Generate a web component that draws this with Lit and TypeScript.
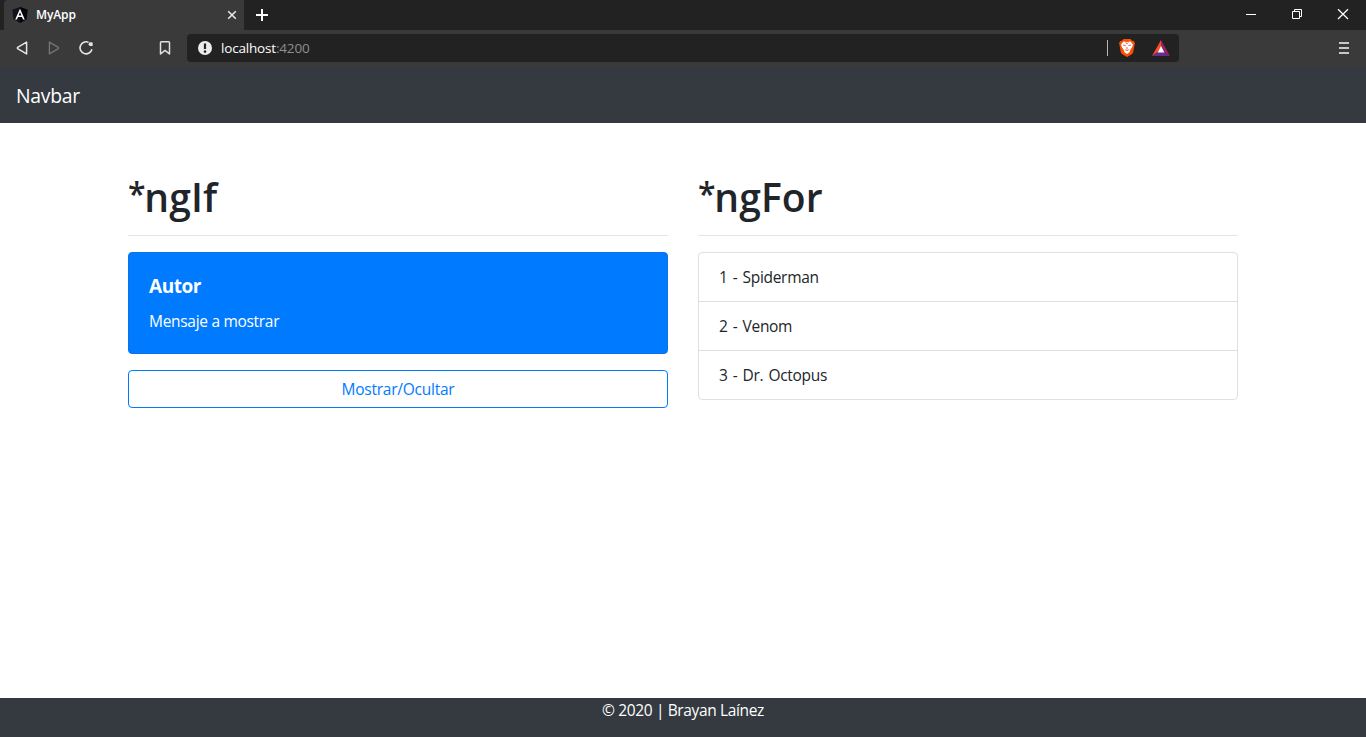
import { LitElement, html, css } from "lit";
import { customElement, state } from "lit/decorators.js";

@customElement("browser-chrome")
export class BrowserChrome extends LitElement {
  static styles = css`
    :host { display: block; flex: none; color: #fff; }
    svg { display: block; flex: none; }
    .strip { height: 30px; background: #222; display: flex; align-items: center; padding-left: 4px; }
    .tab { box-sizing: border-box; width: 240px; height: 30px; background: #3a3a3a; border-radius: 4px 0 0 0;
      display: flex; align-items: center; padding: 0 7px 0 8px; }
    .title { flex: 1; margin-left: 8px; font-size: 12px; font-weight: 600; line-height: 30px; letter-spacing: -0.1px; }
    .plus { margin-left: 12px; }
    .controls { margin-left: auto; display: flex; }
    .control { width: 46px; height: 30px; }
    .bar { box-sizing: border-box; height: 37px; background: #3a3a3a; display: flex; align-items: center;
      padding: 0 17px 1px 15px; }
    .nav { display: flex; gap: 16px; width: 143px; }
    .mark { margin-right: 15px; }
    .address { box-sizing: border-box; width: 992px; height: 28px; background: #222; border-radius: 4px;
      display: flex; align-items: center; padding: 0 9px 0 11px; }
    .url { margin-left: 9px; flex: 1; font-size: 13.5px; line-height: 28px; letter-spacing: -0.18px; color: #8f8f8f; }
    .host { color: #fff; }
    .rule { width: 1px; height: 16px; background: #b5b5b5; margin-right: 11px; }
    .lion { margin-right: 16px; }
    .menu { margin-left: auto; }
  `;

  render() {
    return html`
      <div class="strip">
        <div class="tab">
          <svg width="16" height="16" viewBox="0 0 16 16">
            <path d="M8 0 15.6 2.8 14.5 12.3 8 16 1.5 12.3.4 2.8Z" fill="#10131c"/>
            <path d="M8 0 15.6 2.8 14.5 12.3 8 16Z" fill="#05060c"/>
            <path d="M8 1.8 3.2 12.5H5L6 10.1H10L11 12.5H12.8ZM8 5.2 9.4 8.6H6.6Z" fill="#fff" fill-rule="evenodd"/>
          </svg>
          <span class="title">MyApp</span>
          <svg width="10" height="10" viewBox="0 0 10 10"><path d="M1.2 1.2 8.8 8.8M8.8 1.2 1.2 8.8" stroke="#ececec" stroke-width="1.5"/></svg>
        </div>
        <svg class="plus" width="12" height="12" viewBox="0 0 12 12"><path d="M6 0V12M0 6H12" stroke="#fff" stroke-width="2"/></svg>
        <div class="controls">
          <svg class="control" viewBox="0 0 46 30"><path d="M18 14.5H28" stroke="#fff"/></svg>
          <svg class="control" viewBox="0 0 46 30"><path d="M18.5 11.5H25.5V18.5H18.5ZM20.5 11.5V9.5H27.5V16.5H25.5" fill="none" stroke="#fff"/></svg>
          <svg class="control" viewBox="0 0 46 30"><path d="M18 9.2 28 19M28 9.2 18 19" stroke="#fff" stroke-width="1.2"/></svg>
        </div>
      </div>
      <div class="bar">
        <div class="nav">
          <svg width="16" height="16" viewBox="0 0 16 16"><path d="M11.6 2.1V13.9L2.6 8.6Q2 8 2.6 7.4Z" fill="none" stroke="#e6e6e6" stroke-width="1.5" stroke-linejoin="round"/></svg>
          <svg width="16" height="16" viewBox="0 0 16 16"><path d="M2.4 2.1V13.9L11.3 8.6Q11.9 8 11.3 7.4Z" fill="none" stroke="#737373" stroke-width="1.4" stroke-linejoin="round"/></svg>
          <svg width="16" height="16" viewBox="0 0 16 16">
            <path d="M9.6 2.4A6 6 0 1 0 12.9 9.2" fill="none" stroke="#e6e6e6" stroke-width="1.6"/>
            <path d="M10.4 2.2H12.6Q13.6 2.3 13.6 3.3V6H11Q9.8 5.8 9.6 4.2Z" fill="#e6e6e6"/>
          </svg>
        </div>
        <svg class="mark" width="14" height="16" viewBox="0 0 14 16"><path d="M2.5 2.5Q2.5 1.7 3.3 1.7H10.7Q11.5 1.7 11.5 2.5V14L7 10.4 2.5 14Z" fill="none" stroke="#e0e0e0" stroke-width="1.5" stroke-linejoin="round"/></svg>
        <div class="address">
          <svg width="14" height="14" viewBox="0 0 14 14">
            <circle cx="7" cy="7" r="7" fill="#ececec"/>
            <path d="M7 2.5V8" stroke="#222" stroke-width="2.2"/><circle cx="7" cy="10.6" r="1.3" fill="#222"/>
          </svg>
          <span class="url"><span class="host">localhost</span>:4200</span>
          <span class="rule"></span>
          <svg class="lion" width="17" height="18" viewBox="0.5 0 17 18">
            <path d="M5 0H12L13.6 1.7 15.3 1.9 16.5 4.3 16 6 14.7 13.3Q14.2 14.7 12.8 15.6L8.5 18 4.2 15.6Q2.8 14.7 2.3 13.3L1 6 .5 4.3 1.7 1.9 3.4 1.7Z" fill="#fb4f08"/>
            <path d="M5 2.5 8.5 3 12 2.5 14.5 5.5 13.7 8 12.2 10.3 11.2 12 11.4 13 8.5 15 5.6 13 5.8 12 4.8 10.3 3.3 8 2.5 5.5Z" fill="#fff"/>
            <path d="M4.5 6 7.2 6.7M12.5 6 9.8 6.7M8.5 8V10.5M6.7 10.7 8.5 11.5 10.3 10.7M7 3.7 8.5 4.5 10 3.7" fill="none" stroke="#ef6841" stroke-width="1"/>
          </svg>
          <svg width="18" height="16" viewBox="0 0 18 16">
            <path d="M9 0 0 16 5.8 12 9 5.8Z" fill="#ff4a24"/>
            <path d="M9 0 18 16 12.2 12 9 5.8Z" fill="#9e1f63"/>
            <path d="M0 16H18L12.2 12H5.8Z" fill="#662d91"/>
            <path d="M9 5.8 12.4 12.4H5.6Z" fill="#fff"/>
          </svg>
        </div>
        <svg class="menu" width="10" height="12" viewBox="0 0 10 12"><path d="M0 1H10M0 6H10M0 11H10" stroke="#c8c8c8" stroke-width="1.8"/></svg>
      </div>
    `;
  }
}

@customElement("app-root")
export class AppRoot extends LitElement {
  @state() private visible = true;
  private heroes = ["Spiderman", "Venom", "Dr. Octopus"];

  static styles = css`
    :host { display: flex; flex-direction: column; height: 737px; overflow: hidden; background: #fff; color: #212529;
      font: 400 15.5px/24px "Open Sans", "Noto Sans", sans-serif; letter-spacing: -0.3px; }
    .navbar { box-sizing: border-box; height: 56px; flex: none; background: #343a40; color: #fff; padding: 14px 16px 12px;
      font-size: 19.4px; line-height: 30px; letter-spacing: -0.3px; }
    .content { flex: 1; display: grid; grid-template-columns: 540px 540px; gap: 30px; justify-content: center;
      align-items: start; padding-top: 50px; }
    .heading { margin: 0; height: 48px; font-size: 39px; line-height: 48px; font-weight: 600; letter-spacing: 0.1px; }
    .star { font-size: 32px; line-height: 0; vertical-align: 6px; letter-spacing: -1.2px; }
    .line { height: 1px; background: rgba(0, 0, 0, 0.1); margin: 14px 0 16px; }
    .card { box-sizing: border-box; height: 102px; border: 1px solid #0a73e6; border-radius: 4px; background: #007bff;
      color: #fff; padding: 21px 20px 19px; margin-bottom: 16px; }
    .author { margin: 0 0 11px; font-size: 19px; line-height: 24px; font-weight: 700; letter-spacing: -0.45px; }
    .message { margin: 0; line-height: 24px; }
    .toggle { display: block; box-sizing: border-box; width: 100%; height: 38px; border: 1px solid #007bff;
      border-radius: 4px; background: #fff; color: #007bff; font: inherit; letter-spacing: -0.25px; padding: 0; }
    .list { list-style: none; margin: 0; padding: 0; border: 1px solid #dfdfdf; border-radius: 4px; word-spacing: 1.4px; }
    .item { padding: 12px 20px; }
    .item + .item { border-top: 1px solid #dfdfdf; }
    .footer { box-sizing: border-box; height: 39px; flex: none; background: #343a40; color: #fff; text-align: center;
      letter-spacing: -0.36px; }
  `;

  render() {
    return html`
      <browser-chrome></browser-chrome>
      <nav class="navbar">Navbar</nav>
      <main class="content">
        <section>
          <h1 class="heading"><span class="star">*</span>ngIf</h1>
          <div class="line"></div>
          ${this.visible
            ? html`<div class="card">
                <h5 class="author">Autor</h5>
                <p class="message">Mensaje a mostrar</p>
              </div>`
            : null}
          <button class="toggle" @click=${() => (this.visible = !this.visible)}>Mostrar/Ocultar</button>
        </section>
        <section>
          <h1 class="heading"><span class="star">*</span>ngFor</h1>
          <div class="line"></div>
          <ul class="list">
            ${this.heroes.map((name, i) => html`<li class="item">${i + 1} - ${name}</li>`)}
          </ul>
        </section>
      </main>
      <footer class="footer">© 2020 | Brayan Laínez</footer>
    `;
  }
}
